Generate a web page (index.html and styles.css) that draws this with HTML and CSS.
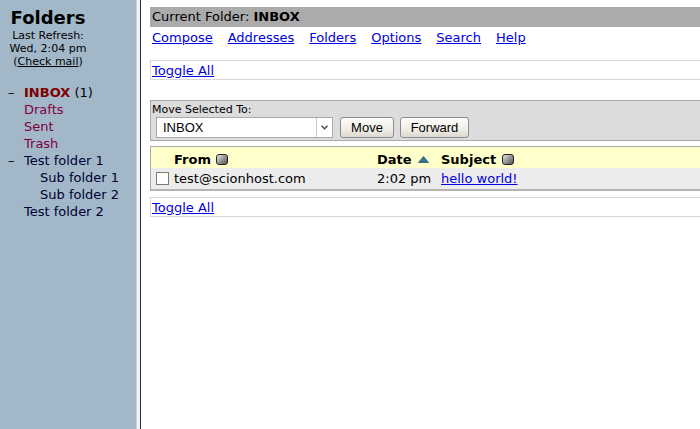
FILE: index.html
```html
<!DOCTYPE html>
<html>
<head>
<meta charset="utf-8">
<link rel="stylesheet" href="styles.css">
</head>
<body>
<div class="frames">
  <div class="sidebar">
    <div class="refresh">
      <div class="title">Folders</div>
      <div class="small">Last Refresh:</div>
      <div class="small">Wed, 2:04 pm</div>
      <div class="small">(<a class="check" href="#">Check mail</a>)</div>
    </div>
    <ul class="folders">
      <li class="folder"><span class="toggle">–</span><a class="inbox" href="#">INBOX</a>&nbsp;<span class="count">(1)</span></li>
      <li class="folder"><span class="toggle"></span><a class="special" href="#">Drafts</a></li>
      <li class="folder"><span class="toggle"></span><a class="special" href="#">Sent</a></li>
      <li class="folder"><span class="toggle"></span><a class="special" href="#">Trash</a></li>
      <li class="folder"><span class="toggle">–</span><a class="plain" href="#">Test folder 1</a></li>
      <li class="folder sub"><span class="toggle"></span><a class="plain" href="#">Sub folder 1</a></li>
      <li class="folder sub"><span class="toggle"></span><a class="plain" href="#">Sub folder 2</a></li>
      <li class="folder"><span class="toggle"></span><a class="plain" href="#">Test folder 2</a></li>
    </ul>
  </div>
  <div class="divider"></div>
  <div class="main">
    <div class="current">Current Folder: <b>INBOX</b></div>
    <nav class="nav">
      <a href="#">Compose</a>
      <a href="#">Addresses</a>
      <a href="#">Folders</a>
      <a href="#">Options</a>
      <a href="#">Search</a>
      <a href="#">Help</a>
    </nav>
    <div class="togglebox top"><a href="#">Toggle All</a></div>
    <div class="movebox">
      <div class="movelabel">Move Selected To:</div>
      <div class="controls">
        <div class="select"><span class="selval">INBOX</span><span class="arrow"><svg width="7" height="5" viewBox="0 0 7 5"><path d="M0.5 0.8 L3.5 3.8 L6.5 0.8" fill="none" stroke="#444" stroke-width="1.3"/></svg></span></div>
        <button class="btn move">Move</button>
        <button class="btn fwd">Forward</button>
      </div>
    </div>
    <div class="msgs">
      <div class="row head">
        <div class="c-check"></div>
        <div class="c-from">From <span class="sorticon"></span></div>
        <div class="c-date">Date <svg class="tri" width="11" height="7" viewBox="0 0 11 7"><polygon points="5.5,0.6 10.4,6.4 0.6,6.4" fill="#2e7896" stroke="#1d4a5c" stroke-width="0.8"/></svg></div>
        <div class="c-subj">Subject <span class="sorticon"></span></div>
      </div>
      <div class="row msg">
        <div class="c-check"><span class="cb"></span></div>
        <div class="c-from">test@scionhost.com</div>
        <div class="c-date">2:02 pm</div>
        <div class="c-subj"><a href="#">hello world!</a></div>
      </div>
    </div>
    <div class="togglebox bottom"><a href="#">Toggle All</a></div>
  </div>
</div>
</body>
</html>
```

FILE: styles.css
```css
* { box-sizing: border-box; }
html, body { margin: 0; padding: 0; height: 100%; overflow: hidden; }
body {
  font-family: "DejaVu Sans", Verdana, sans-serif;
  font-size: 13px;
  color: #000;
  background: #fff;
}
.frames { display: flex; height: 429px; }

.sidebar {
  width: 136px;
  flex: none;
  background: #a2b8c9;
  padding-top: 7px;
}
.refresh { width: 96px; text-align: center; }
.title { font-size: 18px; font-weight: bold; line-height: 22px; color: #000; }
.small { font-size: 11px; line-height: 13px; color: #000; }
.check { color: #000; text-decoration: underline; }
.folders { list-style: none; margin: 16px 0 0 0; padding: 0 0 0 8px; }
.folder { display: flex; line-height: 17px; height: 17px; white-space: nowrap; }
.folder.sub { padding-left: 16px; }
.toggle { width: 16px; flex: none; color: #000; }
.folders a { text-decoration: none; }
.inbox { color: #800000; font-weight: bold; }
.count { color: #000; }
.special { color: #800040; }
.plain { color: #000033; }

.divider {
  width: 5px;
  flex: none;
  background: #f2f2f2;
  border-left: 1px solid #c8d2da;
  border-right: 1px solid #2a2a2a;
}

.main { flex: 1; min-width: 0; padding: 7px 0 0 9px; overflow: hidden; }
.current {
  background: #ababab;
  height: 20px;
  line-height: 20px;
  padding-left: 2px;
}
.nav { display: flex; gap: 15px; padding: 1px 0 0 2px; height: 21px; line-height: 20px; }
.nav a, .togglebox a, .c-subj a { color: #0000e0; text-decoration: underline; }

.togglebox {
  border: 1px solid #d8d8d8;
  border-right: none;
  height: 20px;
  line-height: 17px;
  padding: 1px 0 0 1px;
}
.togglebox.top { margin-top: 12px; }
.togglebox.bottom { margin-top: 6px; }

.movebox {
  margin-top: 20px;
  background: #dcdcdc;
  border: 1px solid #aaaaaa;
  border-right: none;
  height: 41px;
  padding-left: 1px;
}
.movelabel { font-size: 11px; line-height: 14px; height: 16px; padding-top: 2px; }
.controls { display: flex; gap: 6px; padding-left: 4px; margin-top: 0; }
.select {
  width: 177px;
  height: 21px;
  background: #fff;
  border: 1px solid #a5acb2;
  display: flex;
  align-items: center;
  font-family: "Liberation Sans", Arial, sans-serif;
  font-size: 13px;
}
.selval { flex: 1; padding-left: 6px; }
.arrow {
  width: 16px;
  height: 100%;
  border-left: 1px solid #c8c8c8;
  display: flex;
  align-items: center;
  justify-content: center;
}
.btn {
  font-family: "Liberation Sans", Arial, sans-serif;
  font-size: 13px;
  height: 21px;
  padding: 0 9px;
  margin: 0;
  border: 1px solid #8c8c8c;
  border-radius: 3px;
  background: linear-gradient(#fdfdfb, #ece9e2 70%, #dcd8cf);
  color: #000;
  line-height: 19px;
}
.btn.move { width: 54px; margin-left: 1px; }
.btn.fwd { width: 69px; }

.msgs {
  margin-top: 5px;
  border: 1px solid #aaaaaa;
  border-bottom: 2px solid #b4b4b4;
  border-right: none;
}
.row { display: grid; grid-template-columns: 23px 203px 64px 1fr; align-items: center; height: 21px; }
.row.head { background: #ffffcc; font-weight: bold; padding-top: 3px; }
.row.msg { background: #ececec; padding-bottom: 1px; }
.c-check { display: flex; align-items: center; padding-left: 5px; }
.cb { width: 13px; height: 13px; border: 1px solid #7d7d6d; background: #fff; display: block; }
.sorticon {
  display: inline-block;
  width: 12px;
  height: 11px;
  border: 1px solid #222;
  border-radius: 3px;
  background: linear-gradient(135deg, #e6e6e6, #8a8a8a 60%, #555);
  vertical-align: -1px;
  margin-left: 1px;
}
.tri { vertical-align: 1px; margin-left: 2px; }
```
